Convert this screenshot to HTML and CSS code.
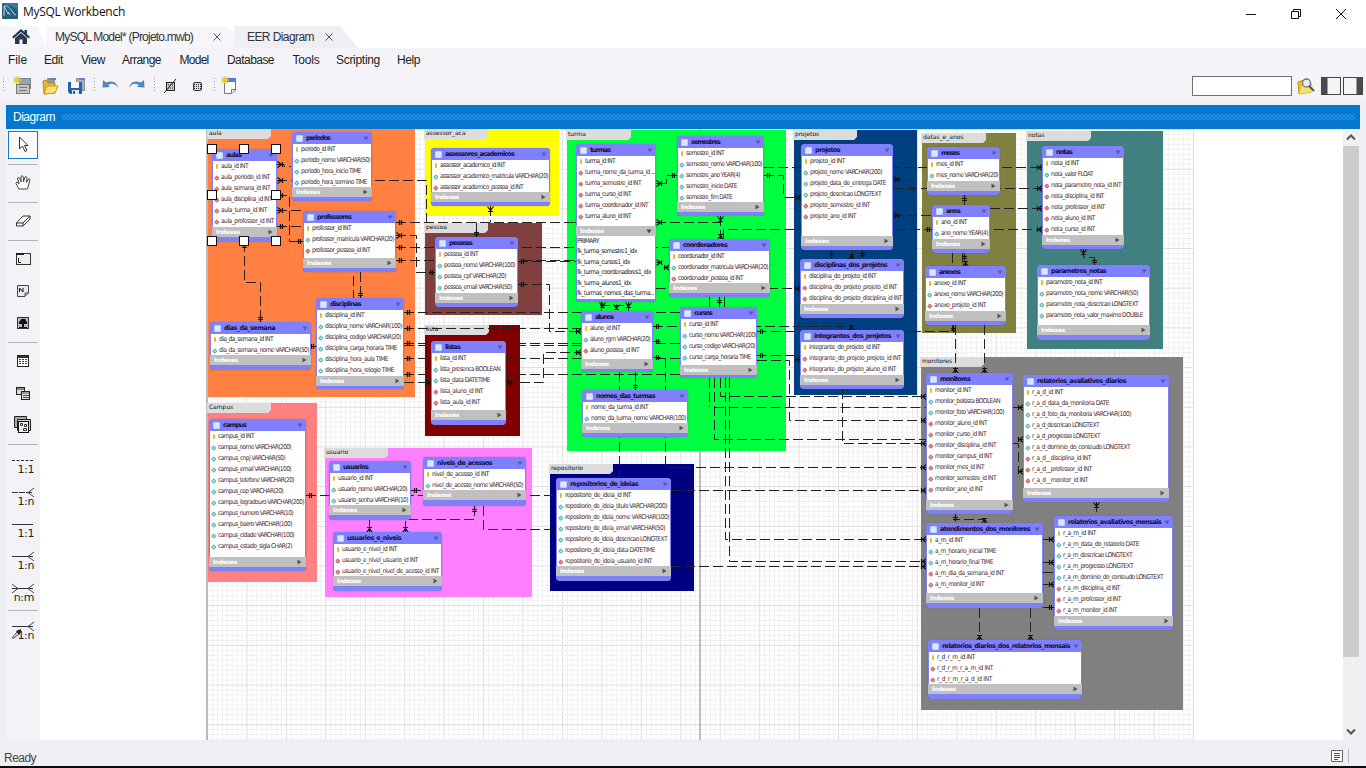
FILE: index.html
```html
<!DOCTYPE html>
<html lang="en">
<head>
<meta charset="utf-8">
<title>MySQL Workbench</title>
<link rel="stylesheet" href="styles.css">
</head>
<body>
<div class="window">
  <header class="titlebar">
    <svg class="logo" width="16" height="16" viewBox="0 0 16 16"><rect width="16" height="16" rx="1" fill="#245f80"/><path d="M0 0H16V7L9 3Z" fill="#34799d"/><path d="M2 13V3C5 2 8 5 10 8L12 11L14 12M2.500 3.500L6 11L6.500 9L8 12" fill="none" stroke="#b9d5e2" stroke-width="1"/></svg>
    <span class="title" data-w="102">MySQL Workbench</span>
    <span class="controls">
      <svg width="12" height="12" viewBox="0 0 12 12"><path d="M1 6.500H11"/></svg>
      <svg width="12" height="12" viewBox="0 0 12 12"><path d="M1.500 3.500H8.500V10.500H1.500ZM3.500 3.500V1.500H10.500V8.500H8.500"/></svg>
      <svg width="12" height="12" viewBox="0 0 12 12"><path d="M1 1L11 11M11 1L1 11"/></svg>
    </span>
  </header>
  <nav class="tabs">
    <div class="tab home"><svg width="18" height="16" viewBox="0 0 18 16"><path d="M9 0L0 8L1.500 9.500L9 3L16.500 9.500L18 8L15 5.200V1H12.500V3Z" fill="#28384e"/><path d="M3 9L9 4L15 9V15H10.500V10.500H7.500V15H3Z" fill="#28384e"/></svg></div>
    <div class="tab model"><span data-w="138">MySQL Model* (Projeto.mwb)</span><svg class="x" width="8" height="8" viewBox="0 0 8 8"><path d="M.5.5L7.500 7.500M7.500.5L.5 7.500"/></svg></div>
    <div class="tab eer"><span data-w="67">EER Diagram</span><svg class="x" width="8" height="8" viewBox="0 0 8 8"><path d="M.5.5L7.500 7.500M7.500.5L.5 7.500"/></svg></div>
  </nav>
  <nav class="menu">
    <span><b data-w="19">File</b></span><span><b data-w="19">Edit</b></span><span><b data-w="24">View</b></span><span><b data-w="39">Arrange</b></span><span><b data-w="29">Model</b></span><span><b data-w="47">Database</b></span><span><b data-w="27">Tools</b></span><span><b data-w="44">Scripting</b></span><span><b data-w="23">Help</b></span>
  </nav>
  <div class="toolbar">
    <svg width="240" height="26" viewBox="0 0 240 26">
      <g stroke="#999" stroke-dasharray="1 2"><path d="M3.500 5V20M94.500 5V20M154.500 5V20M214.500 5V20"/></g>
      <g><rect x="19.500" y="5.500" width="11" height="10" fill="#9aa3b0" stroke="#7d8590"/><rect x="16.500" y="11.500" width="13" height="9" fill="#c5c5c1" stroke="#777"/><path d="M19 14.500H27M19 17.500H27" stroke="#777"/><path d="M17 3V11M13 7H21M14 4L20 10M20 4L14 10" stroke="#e8c93a" stroke-width="1.300"/></g>
      <g><rect x="47" y="5" width="8" height="8" fill="#8e98a7"/><rect x="49" y="5" width="7" height="2" fill="#5c83cc"/><path d="M43 8L46 7L48 10H55V20L44 21Z" fill="#e8b92e" stroke="#b78c19"/><path d="M44 21L47 13H58L55 20Z" fill="#fbe27a" stroke="#c89a21"/></g>
      <g><rect x="76.500" y="5.500" width="8" height="12" fill="#a9adb5" stroke="#8b8f99"/><rect x="79" y="5" width="6" height="2" fill="#5c83cc"/><path d="M68 9H82V21H70L68 19Z" fill="#2164ab"/><rect x="71" y="9" width="8" height="6" fill="#f4f7fb"/><rect x="72" y="17" width="7" height="4" fill="#dde6f0"/><rect x="73" y="18" width="2" height="3" fill="#2164ab"/></g>
      <path d="M103 7L102.500 14.500L110 14L108 12Q114 8.500 118 15Q116 6 106 9.500Z" fill="#4b86bd"/>
      <path d="M144 7L144.500 14.500L137 14L139 12Q133 8.500 129 15Q131 6 141 9.500Z" fill="#4b86bd"/>
      <g fill="none" stroke="#222"><rect x="166.500" y="9.500" width="8" height="8" fill="#c9c9c9"/><path d="M164 20L176 6"/><path d="M168 12H174M168 15H174" stroke-dasharray="1 1"/></g>
      <g fill="none" stroke="#333"><rect x="193.500" y="9.500" width="8" height="8" rx="1.500" fill="#ddd"/><path d="M194 11.500H201M194 13.500H201M194 15.500H201" stroke-dasharray="1 1"/></g>
      <g><path d="M224.500 7.500H235.500V17L232 20.500H224.500Z" fill="#fff" stroke="#777"/><path d="M225 5H236V9H225Z" fill="#4e80d4"/><path d="M231.500 20V16.500H235" fill="none" stroke="#777"/><path d="M225 3V11M221 7H229M222 4L228 10M228 4L222 10" stroke="#e8c93a" stroke-width="1.300"/></g>
    </svg>
    <div class="search">
      <input type="text" aria-label="Search">
      <svg width="18" height="18" viewBox="0 0 18 18"><path d="M1 5L7 3V6H14V15L2 17Z" fill="#edc22f" stroke="#bb901a"/><path d="M2 17L5 9H16L14 15Z" fill="#fbe06e"/><circle cx="9.500" cy="6" r="4" fill="#e9f1f4" stroke="#777" stroke-width="1.300"/><path d="M12 9L17 14" stroke="#555" stroke-width="2"/></svg>
      <svg width="20" height="18" viewBox="0 0 20 18"><rect x=".5" y=".5" width="19" height="17" fill="#f4f4f6" stroke="#444"/><rect x="1" y="1" width="5.500" height="16" fill="#4a4a4e"/></svg>
      <svg width="20" height="18" viewBox="0 0 20 18"><rect x=".5" y=".5" width="19" height="17" fill="#f4f4f6" stroke="#444"/><rect x="13.500" y="1" width="5.500" height="16" fill="#4a4a4e"/></svg>
    </div>
  </div>
  <section class="panel">
    <div class="panelhead"><span data-w="42">Diagram</span><i class="grip"></i></div>
    <div class="workspace">
      <aside class="tools">
        <div class="tool selected"><svg viewBox="0 0 30 32"><path d="M11.500 8V20L14.500 17L17 22.500L19 21.500L16.500 16.500H20Z" fill="#fff" stroke="#333"/></svg></div>
        <div class="sep"></div>
        <div class="tool short"><svg viewBox="0 0 30 32"><path d="M11 22L8 16.500Q8 14.500 10 15.500L11 17L9.500 11Q10 9.500 11.500 11L13 15L13 9.500Q14 8 15.200 9.500L15.500 15L17 10Q18.500 9 19 10.500L18.500 15.500L20.500 12Q22 11.500 22 13L19.500 22Z" fill="#fff" stroke="#444"/></svg></div>
        <div class="sep"></div>
        <div class="tool short"><svg viewBox="0 0 30 32"><path d="M8.500 18L15 11H22V14L15 21H8.500ZM8.500 18H15L22 11M15 18V21" fill="#fff" stroke="#333"/></svg></div>
        <div class="sep before"></div>
        <div class="tool"><svg viewBox="0 0 30 32"><rect x="8.500" y="10.500" width="14" height="11" fill="#eee" stroke="#333"/><path d="M8 11H16" stroke="#222" stroke-width="2"/><path d="M10.500 15V19.500H13" fill="none" stroke="#222"/></svg></div>
        <div class="tool"><svg viewBox="0 0 30 32"><path d="M9.500 10.500H20.500V18L17 21.500H9.500ZM17 21V18H20" fill="#e9e9e9" stroke="#444"/><path d="M11.500 17V13L15 17V13" fill="none" stroke="#111"/></svg></div>
        <div class="tool"><svg viewBox="0 0 30 32"><rect x="9.500" y="10.500" width="11" height="11" fill="#bbb" stroke="#333"/><path d="M11 17Q10 15 12 14Q13 11 15 12Q18 11 18 14Q20 15 19 17H16V20H19V21H11V20H14V17Z" fill="#111"/></svg></div>
        <div class="sep tight"></div>
        <div class="tool"><svg viewBox="0 0 30 32"><rect x="9.500" y="10.500" width="11" height="11" fill="#fff" stroke="#222"/><path d="M10 12H20" stroke="#333" stroke-width="2"/><path d="M11 14.500H19M11 16.500H19M11 18.500H19" stroke="#444" stroke-dasharray="2 1"/></svg></div>
        <div class="tool"><svg viewBox="0 0 30 32"><rect x="8.500" y="10.500" width="8" height="7" fill="#ddd" stroke="#222"/><path d="M9 12H16" stroke="#333"/><rect x="13.500" y="14.500" width="8" height="8" fill="#ddd" stroke="#222"/><path d="M14 16H21M15 18.500H21M15 20.500H21" stroke="#555"/></svg></div>
        <div class="tool"><svg viewBox="0 0 30 32"><path d="M6.500 7.500H18.500V18.500H6.500Z" fill="#aaa" stroke="#222"/><path d="M9.500 10.500H22.500V21.500H9.500Z" fill="#ccc" stroke="#222"/><rect x="10.500" y="12.500" width="10" height="11" fill="#eee" stroke="#111"/><path d="M12.500 14.500H14.500V16.500H12.500ZM16.500 15.500H18.500V17.500H16.500ZM15.500 19.500H18.500V21.500H15.500Z" fill="none" stroke="#333"/></svg></div>
        <div class="sep tight"></div>
        <div class="tool"><svg viewBox="0 0 30 32"><path d="M4 13.500H25" stroke="#333" stroke-dasharray="3 1.500"/></svg><em>1:1</em></div>
        <div class="tool"><svg viewBox="0 0 30 32"><path d="M4 13.500H25" stroke="#333" stroke-dasharray="6 1"/><path d="M26 9L20 13.500L26 18" fill="none" stroke="#444"/></svg><em>1:n</em></div>
        <div class="tool"><svg viewBox="0 0 30 32"><path d="M4 13.500H25" stroke="#333"/></svg><em>1:1</em></div>
        <div class="tool"><svg viewBox="0 0 30 32"><path d="M4 13.500H25" stroke="#333"/><path d="M26 9L20 13.500L26 18" fill="none" stroke="#444"/></svg><em>1:n</em></div>
        <div class="tool"><svg viewBox="0 0 30 32"><path d="M4 13.500H25" stroke="#333"/><path d="M26 9L20 13.500L26 18M4 9L10 13.500L4 18" fill="none" stroke="#444"/></svg><em>n:m</em></div>
        <div class="sep tight"></div>
        <div class="tool"><svg viewBox="0 0 30 32"><path d="M4 13.500H25" stroke="#333"/><path d="M26 9L20 13.500L26 18" fill="none" stroke="#444"/><path d="M4 25L9 19L11 21L6 25Z" fill="#ddd" stroke="#555"/><path d="M8 18L13 16L13 19L11 22Z" fill="#222"/></svg><em>1:n</em></div>
      </aside>
      <main class="canvas" id="canvas"></main>
      <div class="scrollbar"><svg width="16" height="17" viewBox="0 0 16 17"><path d="M4 10.500L8 6.500L12 10.500" /></svg><i></i><svg width="16" height="17" viewBox="0 0 16 17"><path d="M4 6.500L8 10.500L12 6.500"/></svg></div>
    </div>
  </section>
  <footer class="status"><span data-w="32">Ready</span><svg width="22" height="14" viewBox="0 0 22 14"><path d="M.5 1.500H11.500V12.500H.5Z" fill="#fff" stroke="#666"/><path d="M3 4.500H9M3 6.500H9M3 8.500H9M3 10.500H7" stroke="#555"/><path d="M17.500 0V14" stroke="#bbb"/></svg></footer>
</div>
<script src="diagram.js"></script>
</body>
</html>
```
FILE: styles.css
```css
*, *::before { box-sizing: border-box; }
body { margin: 0; overflow: hidden; background: #fff; color: #222; font-family: "Liberation Sans", sans-serif; font-size: 12px; }
.window { width: 1366px; height: 768px; display: flex; flex-direction: column; background: #eeeef3; border-bottom: 2px solid #0c0c0c; }
[data-w] { white-space: pre; display: inline-block; }

.titlebar { height: 26px; background: #fff; display: flex; align-items: flex-start; padding: 3px 0 0 2px; }
.title { margin: 0 0 0 5px; font: 12px/18px "Open Sans", sans-serif; color: #111; }
.controls { margin-left: auto; display: flex; gap: 33px; padding: 5px 19px 0 0; }
.controls svg { fill: none; stroke: #111; }

.tabs { height: 22px; background: #fff; display: flex; }
.tab { height: 22px; display: flex; align-items: center; color: #333; background: #f6f6fa; }
.home { width: 46px; padding-left: 12px; clip-path: polygon(0 0, 38px 0, 46px 100%, 0 100%); }
.model { width: 188px; padding-left: 9px; clip-path: polygon(0 0, 180px 0, 188px 8px, 188px 100%, 0 100%); }
.model .x { margin-left: 20px; }
.eer { width: 124px; padding-left: 13px; background: #eeeef3; clip-path: polygon(0 0, 106px 0, 124px 100%, 0 100%); }
.eer .x { margin-left: 11px; }
.x { stroke: #555; }

.menu { height: 25px; display: grid; grid-template-columns: 36px 37px 41px 57.5px 47.5px 65.5px 43.5px 61px 60px; padding: 0 0 2px 8px; align-items: center; background: #f4f4f8; }
.menu b { font-weight: 400; }
.toolbar { height: 32px; display: flex; justify-content: space-between; background: linear-gradient(#f4f4f8 65%, #eeeef3); }
.search { display: flex; align-items: center; padding: 0 3px 6px 0; }
.search input { width: 100px; height: 20px; border: 1px solid #707070; background: #fff; padding: 0; margin-right: 5px; }
.search svg + svg { margin-left: 6px; }
.search svg + svg + svg { margin-left: 2px; }

.panel { margin: 0 6px; height: 635px; display: flex; flex-direction: column; }
.panelhead { height: 24px; background: #0278d0; color: #fff; display: flex; align-items: center; padding: 0 5px 0 7px; gap: 7px; }
.grip { flex: 1; height: 6px; background-image: radial-gradient(circle, #4ba4e4 .6px, transparent .9px), radial-gradient(circle, #4ba4e4 .6px, transparent .9px); background-size: 4px 4px; background-position: 0 0, 2px 2px; }
.workspace { height: 611px; display: flex; }
.tools { width: 34px; padding: 2px 2px 0; background: #f3f3f7; }
.tool { position: relative; height: 32px; }
.tool svg { display: block; width: 30px; height: 32px; }
.selected { height: 28px; border: 1px solid #1c7ac4; background: #f8f9fd; }
.selected svg { margin: -3px 0 0 -1px; }
.short { height: 28px; }
.short svg { transform: translateY(-2px); }
.sep { height: 10px; background: linear-gradient(#b3b3b8, #b3b3b8) 0 5px / 100% 1px no-repeat; }
.before { margin-bottom: -2px; }
.tight { margin: -2px 0; }
.tool em { position: absolute; right: 4px; top: 16px; font: 11px/13px "DejaVu Sans", sans-serif; letter-spacing: -.4px; color: #222; }

.canvas { position: relative; width: 1303px; height: 611px; background: #fff; overflow: hidden; }
.scrollbar { width: 17px; display: flex; flex-direction: column; background: #f0f0f0; }
.scrollbar i { height: 511px; background: #cdcdcd; margin-right: 1px; }
.scrollbar svg { fill: none; stroke: #555; stroke-width: 2; }
.scrollbar svg:last-child { margin-top: auto; }
.status { height: 26px; display: flex; align-items: center; justify-content: space-between; padding: 10px 13px 0 4px; color: #444; font-size: 12px; }
.status svg { margin-top: -4px; }

/* Diagram */
.plane { position: absolute; left: -40px; top: -129px; width: 1366px; height: 768px; }
.plane > * { position: absolute; }
.links { left: 0; top: 0; }
.layerlabel { height: 10px; background: #dcdcdc; color: #111; font: 6px/8px "DejaVu Sans", sans-serif; clip-path: polygon(0 0, 100% 0, 100% 70%, calc(100% - 3px) 100%, 0 100%); }
.table { display: flex; flex-direction: column; background: #8080f8; border-radius: 4px; box-shadow: 0 0 1px #555; overflow: hidden; }
.thead { flex: none; height: 12px; display: flex; align-items: center; padding: 0 3px 0 4px; font: bold 6.5px/12px "DejaVu Sans", sans-serif; color: #111140; background: #8080ff; }
.thead svg, .idx svg { flex: none; margin-left: auto; }
.cube { width: 7px; height: 7px; border: 1px solid #b8d6f6; background: #d8e9ff; border-radius: 1px; margin-right: 3px; flex: none; }
.tbody { background: #fff; margin: 0 1px; flex: none; }
.row { height: 11px; display: flex; align-items: center; padding-left: 1.500px; font: 6.6px/11px "DejaVu Sans Condensed", "DejaVu Sans", sans-serif; color: #4a2c34; white-space: pre; }
.row::before { content: ""; flex: none; width: 3.6px; height: 3.6px; margin: 0 2.400px 0 .5px; transform: rotate(45deg); border: 1px solid #55b5b0; background: #a5ebe4; border-radius: 1px; }
.row.r::before { border-color: #c96a6a; background: #eb9090; }
.row.k::before { border: 0; background: #e1bd2c; width: 2px; height: 5px; transform: none; margin: 0 3.200px 0 1.300px; }
.row.k { color: #2c2c2c; }
.row.i::before { display: none; }
.row.i { padding-left: 0; height: 10.5px; color: #222; }
.idx { position: relative; flex: none; height: 10px; background: #c0c0c0; display: flex; align-items: center; padding: 0 4px; color: #fff; font: bold 6px/10px "DejaVu Sans", sans-serif; letter-spacing: -.35px; }
.handle { width: 10px; height: 10px; background: #fff; border: 1px solid #111; }
```
FILE: diagram.js
```js
// Layers: x, y, right, bottom, colour, label, label right edge
const layers = [
  [208,129,415,397,'#ff8040','aula',272],[208,403,317,582,'#ff8080','Campus',272],
  [425,129,559,216,'#ffff00','assessor_aca',489],[425,223,542,315,'#804040','pessoa',489],
  [425,325,520,436,'#800000','lista',490],[567,130,786,451,'#00ff40','turma',632],
  [794,130,917,395,'#004080','projetos',858],[922,133,1016,333,'#808040','datas_e_anos',987],
  [1027,131,1163,349,'#408080','notas',1092],[921,357,1183,710,'#808080','monitores',985],
  [325,448,532,597,'#ff80ff','usuario',389],[550,464,694,591,'#000080','repositorio',614]
];
// Tables: title, title end, x, y, right, bottom, first row centre, index bar top, rows ("kind text|end")
const tables = [
['aulas',241,212,149,277,242,166.5,227,'k aula_id INT|248;r aula_periodo_id INT|270;r aula_semana_id INT|270;r aula_disciplina_id INT|272;r aula_turma_id INT|267;r aula_professor_id INT|274'],
['periodos',330,292,132,372,201,149,187,'k periodo_id INT|335;c periodo_nome VARCHAR(50)|370;c periodo_hora_inicio TIME|361;c periodo_hora_termino TIME|367'],
['professores',351,303,211,396,272,228,258,'k professor_id INT|351;c professor_matricula VARCHAR(20)|394;r professor_pessoa_id INT|370'],
['dias_da_semana',275,210,322,311,370,339,355,'k dia_da_semana_id INT|273;c dia_da_semana_nome VARCHAR(50)|309'],
['disciplinas',361,316,298,404,389,315,376,'k disciplina_id INT|364;c disciplina_nome VARCHAR(100)|402;c disciplina_codigo VARCHAR(20)|401;c disciplina_carga_horaria TIME|397;c disciplina_hora_aula TIME|388;c disciplina_hora_relogio TIME|394'],
['assessores_academicos',514,431,148,550,206,165,192,'k assessor_academico_id INT|505;c assessor_academico_matricula VARCHAR(20)|548;r assessor_academico_pessoa_id INT|523'],
['pessoas',472,435,237,518,307,255,293,'k pessoa_id INT|478;c pessoa_nome VARCHAR(100)|515;c pessoa_cpf VARCHAR(20)|506;c pessoa_email VARCHAR(50)|512'],
['listas',460,431,341,506,425,358,410,'k lista_id INT|466;c lista_presenca BOOLEAN|500;c lista_data DATETIME|490;r lista_aluno_id INT|483;r lista_aula_id INT|480'],
['turmas',610,576,144,656,302,161,226,'k turma_id INT|615;r turma_nome_da_turma_id ...|655;r turma_semestre_id INT|641;r turma_curso_id INT|631;r turma_coordenador_id INT|648;r turma_aluno_id INT|631','PRIMARY|599;fk_turma_semestre1_idx|637;fk_turma_cursos1_idx|630;fk_turma_coordenadores1_idx|651;fk_turma_alunos1_idx|631;fk_turmas_nomes_das_turma...|654'],
['semestres',720,677,136,764,216,153,202,'k semestre_id INT|724;c semestre_nome VARCHAR(100)|762;c semestre_ano YEAR(4)|740;c semestre_inicio DATE|737;c semestre_fim DATE|732'],
['coordenadores',727,669,239,770,297,256,283,'k coordenador_id INT|724;c coordenador_matricula VARCHAR(20)|768;r coordenador_pessoa_id INT|743'],
['alunos',613,581,311,653,372,328,359,'k aluno_id INT|620;c aluno_rgm VARCHAR(20)|650;r aluno_pessoa_id INT|639'],
['cursos',712,680,307,757,378,324,365,'k curso_id INT|718;c curso_nome VARCHAR(100)|756;c curso_codigo VARCHAR(20)|755;c curso_carga_horaria TIME|751'],
['nomes_das_turmas',655,582,390,688,437,407,423,'k nome_da_turma_id INT|648;c nome_da_turma_nome VARCHAR(100)|686'],
['projetos',840,801,144,893,250,162,236,'k projeto_id INT|845;c projeto_nome VARCHAR(200)|882;c projeto_data_de_entrega DATE|886;c projeto_descricao LONGTEXT|881;r projeto_semestre_id INT|870;r projeto_ano_id INT|856'],
['disciplinas_dos_projetos',887,800,259,904,318,277,304,'k disciplina_do_projeto_id INT|876;r disciplina_do_projeto_projeto_id INT|897;r disciplina_do_projeto_disciplina_id INT|902'],
['integrantes_dos_projetos',891,800,330,904,389,348,375,'k integrante_do_projeto_id INT|880;r integrante_do_projeto_projeto_id INT|901;r integrante_do_projeto_aluno_id INT|896'],
['meses',959,927,147,1000,195,165,181,'k mes_id INT|963;c mes_nome VARCHAR(20)|998'],
['anos',960,932,205,990,253,223,239,'k ano_id INT|967;c ano_nome YEAR(4)|988'],
['anexos',960,925,266,1006,325,284,311,'k anexo_id INT|966;c anexo_nome VARCHAR(200)|1003;r anexo_projeto_id INT|986'],
['notas',1072,1042,146,1124,249,164,235,'k nota_id INT|1079;c nota_valor FLOAT|1093;r nota_parametro_nota_id INT|1121;r nota_disciplina_id INT|1104;r nota_professor_id INT|1105;r nota_aluno_id INT|1095;r nota_curso_id INT|1095'],
['parametros_notas',1106,1037,265,1150,340,283,325,'k parametro_nota_id INT|1102;c parametro_nota_nome VARCHAR(50)|1138;c parametro_nota_descricao LONGTEXT|1138;c parametro_nota_valor_maximo DOUBLE|1143'],
['monitores',970,926,373,1013,514,391,500,'k monitor_id INT|971;c monitor_bolsista BOOLEAN|1000;c monitor_foto VARCHAR(100)|1004;r monitor_aluno_id INT|987;r monitor_curso_id INT|986;r monitor_disciplina_id INT|996;r monitor_campus_id INT|992;r monitor_mes_id INT|984;r monitor_semestre_id INT|996;r monitor_ano_id INT|983'],
['relatorios_avaliativos_diarios',1126,1023,375,1169,502,393,488,'k r_a_d_id INT|1063;c r_a_d_data_da_monitoria DATE|1109;c r_a_d_foto_da_monitoria VARCHAR(100)|1131;c r_a_d_descricao LONGTEXT|1099;c r_a_d_progresso LONGTEXT|1100;c r_a_d_dominio_do_conteudo LONGTEXT|1130;r r_a_d__disciplina_id INT|1091;r r_a_d__professor_id INT|1092;r r_a_d__monitor_id INT|1088'],
['relatorios_avaliativos_mensais',1161,1054,516,1173,630,534,616,'k r_a_m_id INT|1096;c r_a_m_data_do_relatorio DATE|1139;c r_a_m_descricao LONGTEXT|1132;c r_a_m_progresso LONGTEXT|1133;c r_a_m_dominio_do_conteudo LONGTEXT|1163;r r_a_m_disciplina_id INT|1120;r r_a_m_professor_id INT|1121;r r_a_m_monitor_id INT|1117'],
['atendimentos_dos_monitores',1030,926,523,1043,608,541,593,'k a_m_id INT|963;c a_m_horario_inicial TIME|996;c a_m_horario_final TIME|993;r a_m_dia_da_semana_id INT|1004;r a_m_monitor_id INT|984'],
['relatorios_diarios_dos_relatorios_mensais',1070,928,640,1082,699,658,684,'k r_d_r_m_id INT|975;r r_d_r_m_r_a_m_id INT|993;r r_d_r_m_r_a_d_id INT|992'],
['campus',246,209,419,306,571,436,557,'k campus_id INT|254;c campus_nome VARCHAR(200)|291;c campus_cnpj VARCHAR(50)|285;c campus_email VARCHAR(100)|291;c campus_telefone VARCHAR(20)|294;c campus_cep VARCHAR(20)|283;c campus_logradouro VARCHAR(200)|304;c campus_numero VARCHAR(10)|293;c campus_bairro VARCHAR(100)|292;c campus_cidade VARCHAR(100)|294;c campus_estado_sigla CHAR(2)|292'],
['usuarios',368,329,461,411,520,479,505,'k usuario_id INT|373;c usuario_nome VARCHAR(20)|407;c usuario_senha VARCHAR(10)|408'],
['niveis_de_acessos',492,423,457,526,506,475,490,'k nivel_de_acesso_id INT|489;c nivel_de_acesso_nome VARCHAR(50)|523'],
['usuarios_e_niveis',401,333,532,442,591,550,576,'k usuario_e_nivel_id INT|397;r usuario_e_nivel_usuario_id INT|418;r usuario_e_nivel_nivel_de_acesso_id INT|439'],
['repositorios_de_ideias',638,556,478,671,581,496,566,'k repositorio_de_ideia_id INT|631;c repositorio_de_ideia_titulo VARCHAR(200)|667;c repositorio_de_ideia_nome VARCHAR(100)|669;c repositorio_de_ideia_email VARCHAR(50)|665;c repositorio_de_ideia_descricao LONGTEXT|667;c repositorio_de_ideia_data DATETIME|655;r repositorio_de_ideia_usuario_id INT|652']
];
const links = `M277 164.500H284V166.500H291 M277 180.500H426.500V222 M277 195.500H289.500V241.500H303 M277 210.500H303 M277 226.500H303
M244.500 242V282.500H260.500V322 M396 222.500H576 M656 222.500H720 M396 235.500H416.500V268 M396 247.500H669 M396 260.500H576 M518 261.500H576 M416 272.500H435
M360.500 272V298 M353.500 276V298 M404 312.500H680 M404 328.500H581 M653 326.500H851.500V330 M404 343.500H680 M404 345.500H581 M404 358.500H680
M665.500 358V467.500H926 M619.500 372V478 M635.500 372V390 M404 374.500H700 M404 382.500H431 M506 382.500H543.500V352.500H581 M311 346.500H316
M518 284.500H549.500V331.500H581 M490.500 206V222 M490.500 222.500H476.500V237 M677 175.500H666.500V183.500H656 M764 175.500H783.500V197.500H801 M764 167.500H1042
M720.500 216V239 M723.500 239V229.500H1042 M893 179.500H913.500V229.500 M893 188.500H1042 M893 215.500H932 M990 208.500H1042
M709.500 297V307 M719.500 297V307 M724.500 297V307 M656 288.500H800 M757 331.500H952.500V325 M757 355.500H800 M757 360.500H789.500V420.500H926
M720.500 378V396.500H926 M714.500 378V439.500H926 M714.500 407.500H926 M709.500 378V407 M725.500 378V539.500H926 M729.500 378V561.500H926 M842.500 389V443.500H926
M306 495.500H556 M671 490.500H926 M671 566.500H926 M474.500 506V519.500H405.500V532 M369.500 520V532 M411 490.500H423 M483.500 506V529.500H556
M831.500 250V259 M852.500 250V259 M851.500 318V330 M964.500 195V205 M952.500 253V266 M962.500 253V266 M955.500 325V373 M984.500 325V373
M1083.500 249V257.500H1094.500V265 M1013 407.500H1023 M1013 443.500H1018.500V471.500H1023 M1018 439.500H1023 M955.500 514V519.500H984.500V523
M1096.500 502V516 M1043 539.500H1054 M1043 562.500H1054 M1043 584.500H1054 M1043 572.500H1054 M1043 607.500H1052 M979.500 608V640 M1030.500 608V640 M600 305.500H628 M601.500 302V311 M628.500 302V311`;
// Crow's feet (side of the table they touch) and single-end bars
const feet = 'R277,164 R277,180 R277,195 R277,210 D244,242 R396,235 D490,206 R656,183 R656,222 R656,262 L669,267 D602,302 D628,302 D616,304 L581,331 L581,352 R506,382 L431,382 L801,197 R893,179 R893,215 L800,288 L800,359 U851,259 U851,330 U720,239 L1042,167 L1042,188 L1042,208 L1042,229 U955,373 U984,373 U965,266 D1083,249 L926,396 L926,420 L926,443 L926,467 L926,490 L926,539 L926,566 L926,561 L1023,407 L1023,439 L1023,471 L1054,539 L1054,562 L1054,584 U984,523 U979,640 U1030,640 D1096,502 U369,532 U405,532 L556,529 D720,216';
const bars = 'R277,226 L303,241 R396,222 R396,247 R396,260 R404,312 R404,328 R404,343 R404,358 R404,374 U260,322 U360,298 R518,261 R518,284 U476,237 L677,175 R764,175 R306,495 R411,490 D474,506 L932,229 U1094,265 R757,331 R757,355 R653,326 R653,341 R653,357 U635,390 D719,297 D831,250 D862,250 D964,195 D964,253 D953,325 D955,514 L1054,607 L581,222 L435,272 L316,346';

const dirs = {R:[1,0],L:[-1,0],U:[0,-1],D:[0,1]};
function marks(list, foot) {
  return list.split(' ').map(m => {
    const [dx, dy] = dirs[m[0]], [x, y] = m.slice(1).split(',').map(n => +n + .5);
    const p = (a, s) => `${x + dx * a - dy * s} ${y + dy * a + dx * s}`;
    return foot ? `M${p(0,-3)}L${p(4,0)}L${p(0,3)}M${p(0,0)}L${p(5,0)}M${p(5,-2.5)}L${p(5,2.5)}`
                : `M${p(3,-2.5)}L${p(3,2.5)}M${p(5,-2.5)}L${p(5,2.5)}M${p(0,0)}L${p(7,0)}`;
  }).join('');
}

const box = (x, y, r, b) => `left:${x}px;top:${y}px;width:${r - x}px;height:${b - y}px`;
const down = '<svg width="6" height="5" viewBox="0 0 6 5"><path d="M.5.5H5.500L3 4.500Z" fill="#5a5aa8"/></svg>';
const darkDown = down.replace('#5a5aa8', '#444');
const right = '<svg width="5" height="6" viewBox="0 0 5 6"><path d="M.5.5V5.500L4.500 3Z" fill="#555"/></svg>';

let grid = '';
for (let i = 0; i < 201; i++) grid += `<path d="M${(207.5 + i * 4.93).toFixed(1)} 129V740" stroke="${i % 8 ? '#f0f0f0' : '#dedede'}"/>`;
for (let i = 0; i < 124; i++) grid += `<path d="M207 ${(129.5 + i * 4.96).toFixed(1)}H1193" stroke="${i % 8 ? '#f0f0f0' : '#dedede'}"/>`;
grid += '<path d="M207 129V740M700 129V740" stroke="#aaa" stroke-width="1.500"/>';

let html = `<svg class="links" width="1366" height="768">${grid}</svg>`;
for (const [x, y, r, b, c, t, e] of layers)
  html += `<div style="${box(x, y, r, b)};background:${c}"></div><div class="layerlabel" style="left:${x - 1}px;top:${y}px;width:${e - x}px">&nbsp;${t}</div>`;
html += `<svg class="links" width="1366" height="768" fill="none"><path d="${links}" stroke="#222" stroke-dasharray="10 4"/><path d="${marks(feet, true)}${marks(bars, false)}" stroke="#111" stroke-width="1.200"/></svg>`;
for (const [t, te, x, y, r, b, first, iy, rows, list] of tables) {
  html += `<div class="table" style="${box(x, y, r, b)}"><div class="thead"><i class="cube"></i><span data-w="${te - x - 14}">${t}</span>${down}</div>`;
  html += `<div class="tbody" style="height:${iy - y - 12}px;padding-top:${Math.max(0, first - 6.5 - y - 12)}px">`;
  for (const row of rows.split(';')) {
    const [s, e] = row.split('|');
    html += `<div class="row ${s[0]}"><span data-w="${e - x - 9}">${s.slice(2)}</span></div>`;
  }
  html += `</div><div class="idx"><span>Indexes</span>${list ? darkDown : right}</div>`;
  if (list) html += '<div class="tbody">' + list.split(';').map(s => { const [n, e] = s.split('|'); return `<div class="row i"><span data-w="${e - x - 1}">${n}</span></div>`; }).join('') + '</div>';
  html += '</div>';
}
for (const hy of [149, 195, 241]) for (const hx of [212, 244, 276])
  if (hx !== 244 || hy !== 195) html += `<i class="handle" style="left:${hx - 5}px;top:${hy - 5}px"></i>`;
document.getElementById('canvas').innerHTML = `<div class="plane">${html}</div>`;

// Tracks each label so that it spans its measured width
for (const el of document.querySelectorAll('[data-w]')) {
  const gap = el.dataset.w - el.getBoundingClientRect().width;
  el.style.letterSpacing = gap / el.textContent.length + 'px';
}
```
